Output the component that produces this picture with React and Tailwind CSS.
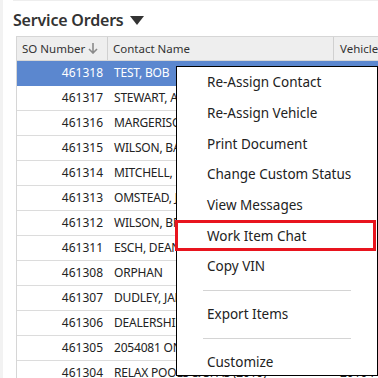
const rows = [
  ['461318', 'TEST, BOB', ''],
  ['461317', 'STEWART, ANDREW', ''],
  ['461316', 'MARGERISON, KEITH', ''],
  ['461315', 'WILSON, BARRY', ''],
  ['461314', 'MITCHELL, DAVID', ''],
  ['461313', 'OMSTEAD, JOHN', ''],
  ['461312', 'WILSON, BRIAN', ''],
  ['461311', 'ESCH, DEAN', ''],
  ['461308', 'ORPHAN', ''],
  ['461307', 'DUDLEY, JAMES', ''],
  ['461306', 'DEALERSHIP', ''],
  ['461305', '2054081 ONTARIO INC', ''],
  ['461304', 'RELAX POOLS & SPAS (2010)', '2010 FORD'],
];

const menuGroups = [
  ['Re-Assign Contact', 'Re-Assign Vehicle', 'Print Document', 'Change Custom Status', 'View Messages', 'Work Item Chat', 'Copy VIN'],
  ['Export Items'],
  ['Customize'],
];

function App() {
  return (
    <div
      className="relative w-[378px] h-[378px] overflow-hidden bg-white text-[#222]"
      style={{ fontFamily: '"Noto Sans", "Open Sans", sans-serif' }}
    >
      <div className="flex h-full">
        <div className="w-[3px] bg-[#f2f2f2] shrink-0" />
        <div className="flex-1 pl-[10px]">
          <div className="border-t border-[#eeeeee] h-[8px]" />
          <div className="flex items-center h-[24px] gap-[6px]">
            <span className="text-[16px] font-semibold text-[#333] tracking-[-0.2px]">Service Orders</span>
            <svg width="14" height="9" viewBox="0 0 14 9">
              <path d="M0 0 L14 0 L7 9 Z" fill="#333" />
            </svg>
          </div>

          <div className="ml-[3px] mt-[4px] border-l border-[#d6d6d6] text-[12px]">
            <div className="flex h-[25px] bg-[#eeeeee] border-y border-[#d6d6d6] text-[#333] text-[11.5px]">
              <div className="w-[91px] shrink-0 flex items-center justify-between pl-[5px] pr-[9px] border-r border-[#d0d0d0]">
                <span>SO Number</span>
                <svg width="10" height="11" viewBox="0 0 10 11">
                  <path d="M5 0 V10 M1 6 L5 10 L9 6" stroke="#8a8a8a" strokeWidth="1.6" fill="none" />
                </svg>
              </div>
              <div className="w-[226px] shrink-0 flex items-center pl-[5px] border-r border-[#d0d0d0]">Contact Name</div>
              <div className="flex-1 flex items-center pl-[6px] whitespace-nowrap">Vehicle</div>
            </div>
            {rows.map(([no, name, veh], i) => (
              <div
                key={no}
                className={
                  i === 0
                    ? 'flex h-[25px] bg-[#5b87cf] text-white border-b border-[#5b87cf]'
                    : 'flex h-[25px] border-b border-[#dcdcdc] text-[#222]'
                }
              >
                <div className="w-[91px] shrink-0 flex items-center justify-end pr-[5px]">{no}</div>
                <div className="w-[226px] shrink-0 flex items-center pl-[6px] whitespace-nowrap overflow-hidden tracking-[-0.2px]">{name}</div>
                <div className="flex-1 flex items-center pl-[6px] whitespace-nowrap overflow-hidden">{veh}</div>
              </div>
            ))}
          </div>
        </div>
      </div>

      <div className="absolute left-[176px] top-[66px] w-[202px] h-[310px] bg-white border border-black text-[13.5px] text-[#222]">
        {menuGroups.map((group, gi) => (
          <div key={gi}>
            {gi > 0 && <div className="mx-[26px] my-[8px] border-t border-[#d4d4d4]" />}
            {group.map((label) => (
              <div key={label} className="relative h-[30.7px] flex items-center pl-[30px]">
                {label === 'Work Item Chat' && (
                  <div className="absolute left-[-2px] right-[1px] top-0 bottom-0 border-[3px] border-[#e8141e]" />
                )}
                <span>{label}</span>
              </div>
            ))}
          </div>
        ))}
      </div>
    </div>
  );
}

export default App;
